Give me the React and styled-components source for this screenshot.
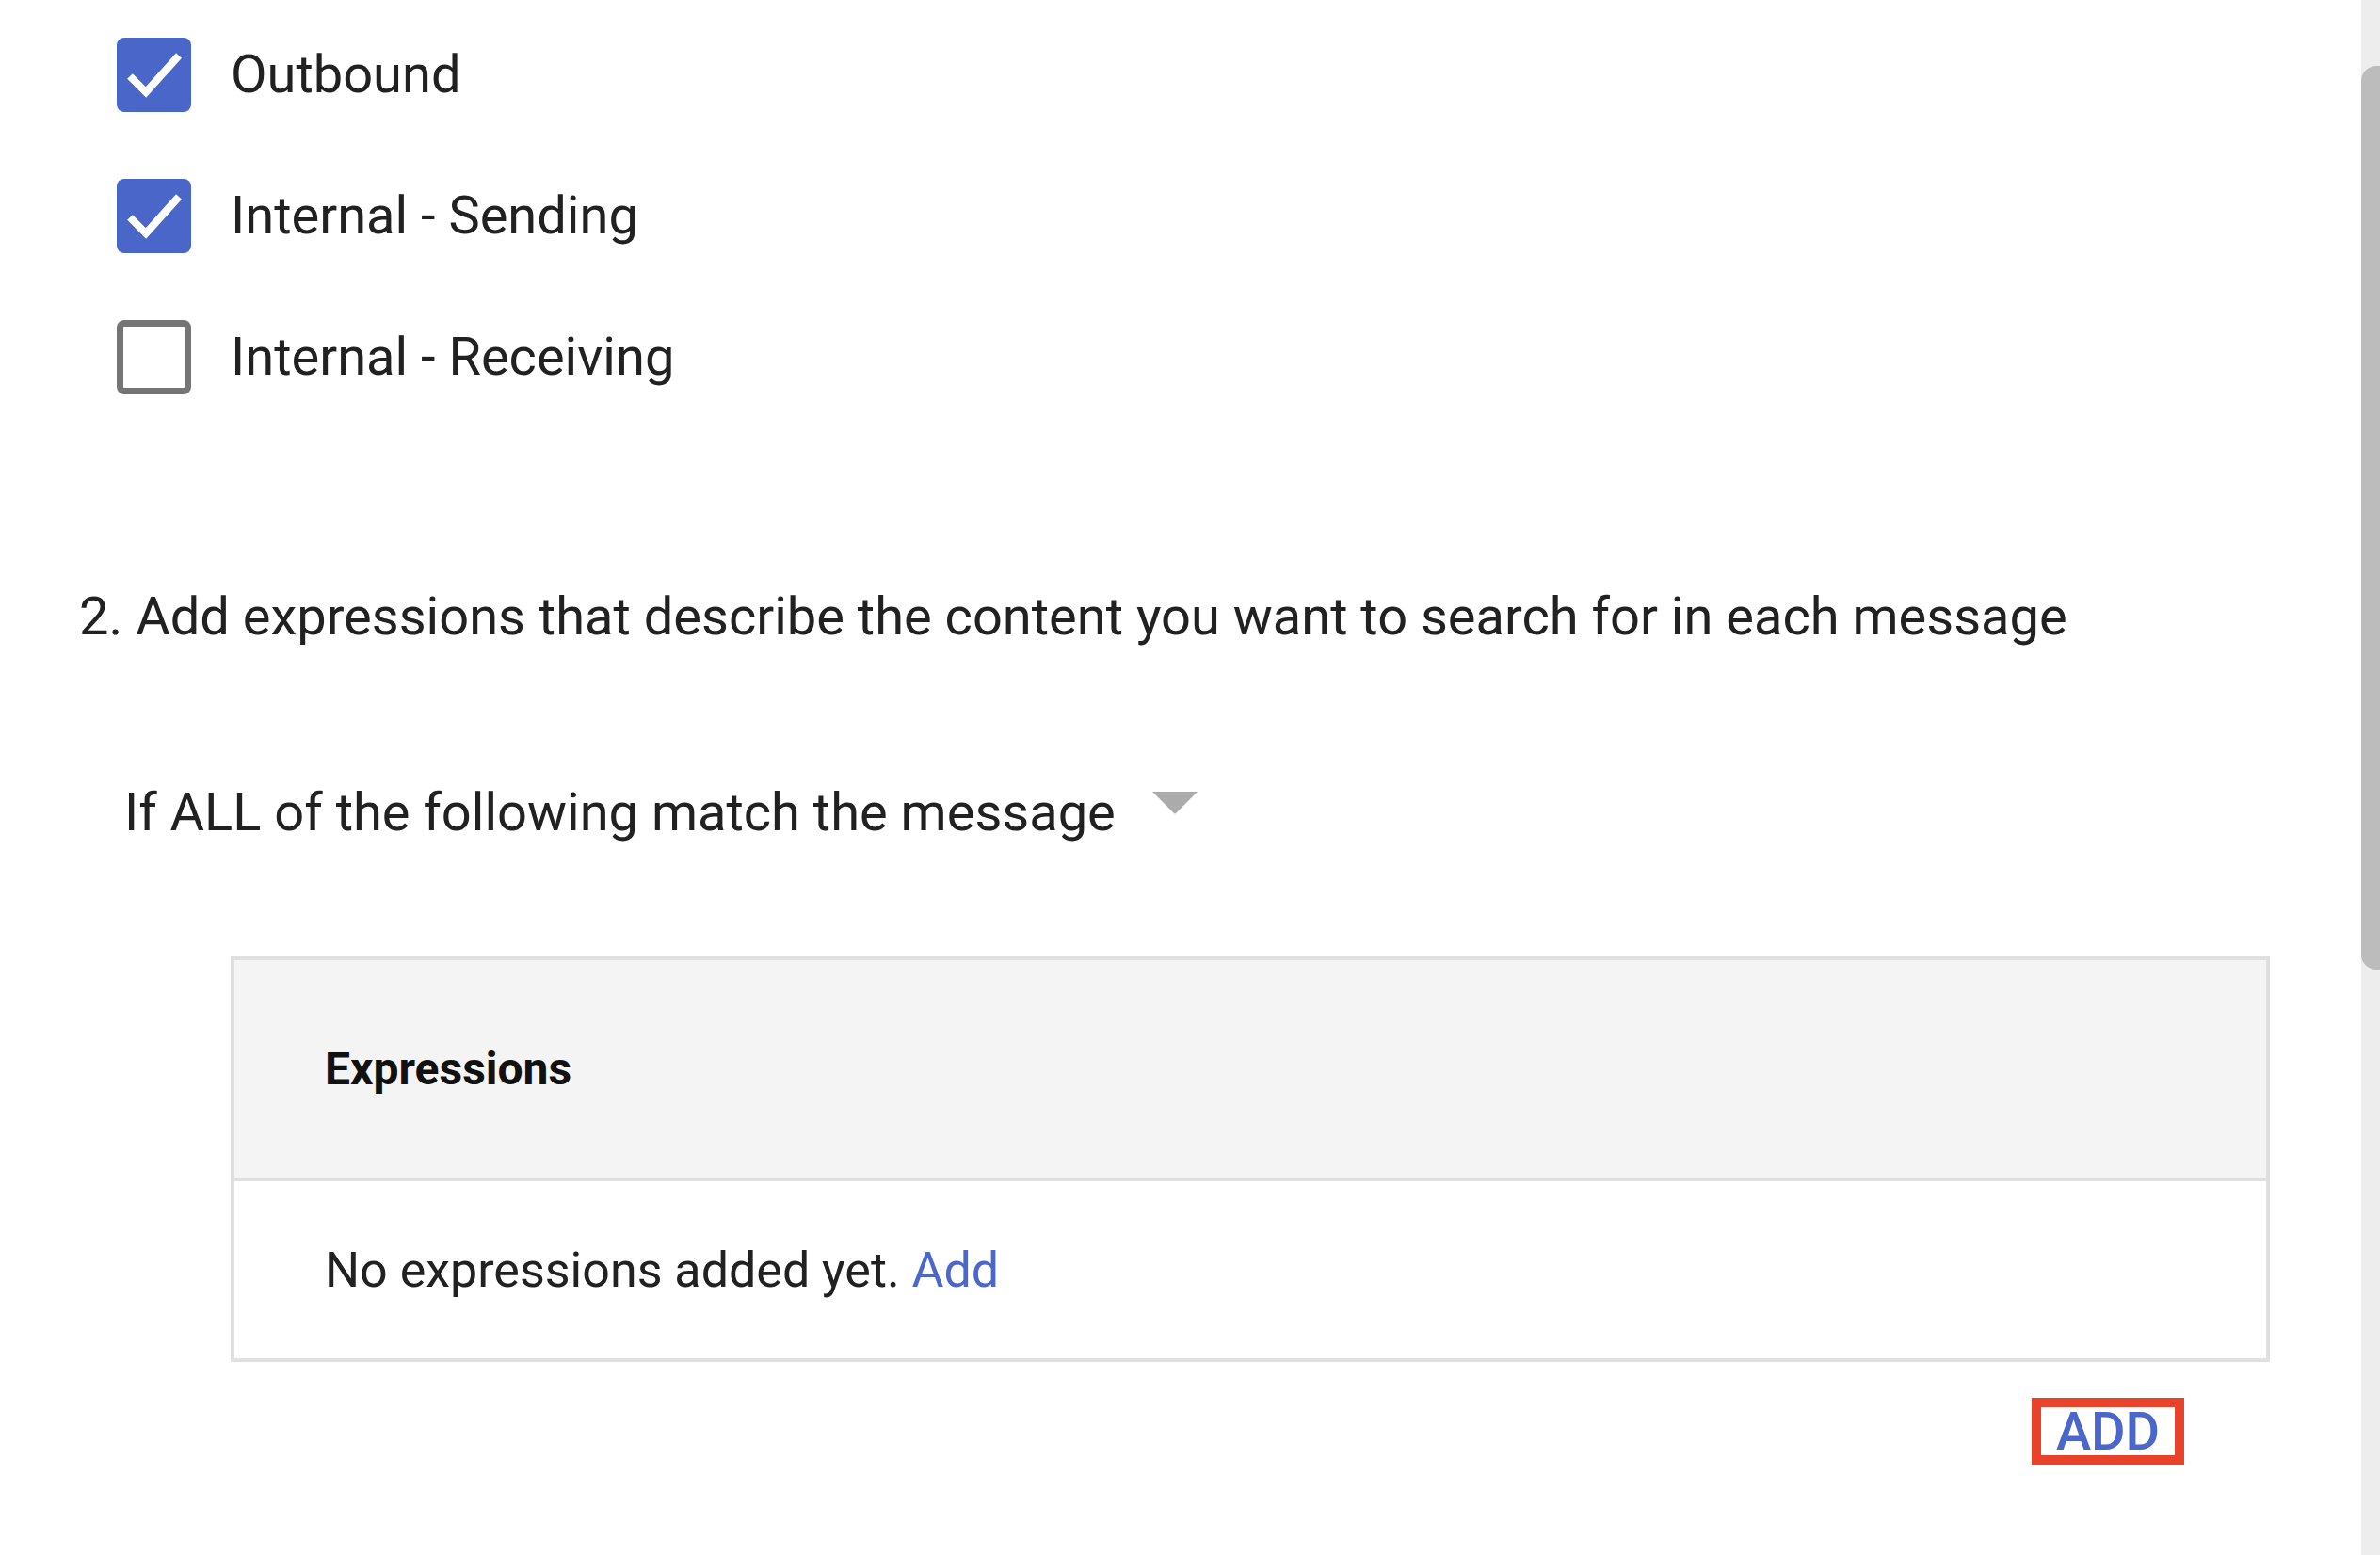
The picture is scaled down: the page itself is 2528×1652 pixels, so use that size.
import React from "react";
import styled, { createGlobalStyle } from "styled-components";

const GlobalStyle = createGlobalStyle`
    html, body {
        margin: 0;
        padding: 0;
        background: #fff;
        overflow: hidden;
    }
    body {
        font-family: Roboto, "Liberation Sans", Arial, sans-serif;
        color: #212121;
    }
`;

const Screen = styled.div`
    display: flex;
    width: 2528px;
    height: 1652px;
`;

const Content = styled.main`
    flex: 1;
    padding: 40px 0 0 0;
`;

const OptionList = styled.div`
    display: flex;
    flex-direction: column;
    gap: 71px;
    padding-left: 124px;
`;

const Option = styled.label`
    display: flex;
    align-items: center;
    gap: 42px;
    font-size: 56px;
    line-height: 79px;
`;

const Box = styled.span`
    box-sizing: border-box;
    width: 79px;
    height: 79px;
    border-radius: 8px;
    display: flex;
    align-items: center;
    justify-content: center;
    background: ${props => props.checked ? '#4a66c9' : '#fff'};
    border: ${props => props.checked ? 'none' : '7px solid #757575'};
`;

const StepTitle = styled.h2`
    margin: 203px 0 0 84px;
    font-size: 56px;
    font-weight: 400;
    line-height: 66px;
`;

const MatchRow = styled.div`
    display: flex;
    align-items: center;
    gap: 39px;
    margin: 142px 0 0 132px;
    font-size: 56px;
    line-height: 66px;
`;

const Caret = styled.span`
    width: 0;
    height: 0;
    border-left: 24px solid transparent;
    border-right: 24px solid transparent;
    border-top: 24px solid #ababab;
    margin-top: -20px;
`;

const Table = styled.div`
    margin: 120px 0 0 245px;
    width: 2166px;
    box-sizing: border-box;
    border: 4px solid #e0e0e0;
`;

const HeaderCell = styled.div`
    background: #f4f4f4;
    height: 231px;
    display: flex;
    align-items: center;
    padding-left: 96px;
    font-size: 48px;
    font-weight: 700;
    color: #111;
    border-bottom: 4px solid #e0e0e0;
`;

const BodyCell = styled.div`
    height: 188px;
    display: flex;
    align-items: center;
    padding-left: 96px;
    font-size: 52px;
    white-space: pre;
`;

const Link = styled.a`
    color: #4a67c9;
    text-decoration: none;
`;

const Footer = styled.div`
    display: flex;
    justify-content: flex-end;
    width: 2320px;
    margin-top: 38px;
`;

const AddButton = styled.button`
    box-sizing: border-box;
    width: 162px;
    height: 71px;
    border: 10px solid #e8432a;
    background: #fff;
    color: #4a67c9;
    font-family: Roboto, "Liberation Sans", Arial, sans-serif;
    font-size: 56px;
    font-weight: 500;
    line-height: 1;
    padding: 0;
    display: flex;
    align-items: center;
    justify-content: center;
`;

const Track = styled.div`
    width: 20px;
    height: 1652px;
    background: #ededed;
    padding-top: 70px;
    box-sizing: border-box;
`;

const Thumb = styled.div`
    height: 960px;
    background: #bcbcbc;
    border-radius: 16px 0 0 16px;
`;

const Check = () => (
    <svg width="79" height="79" viewBox="0 0 79 79">
        <path d="M14 41 L31 58 L66 19" fill="none" stroke="#fff" strokeWidth="8" />
    </svg>
);

const options = [
    {label: 'Outbound', checked: true},
    {label: 'Internal - Sending', checked: true},
    {label: 'Internal - Receiving', checked: false},
];

const App = () => {
    return (
        <Screen>
            <GlobalStyle />
            <Content>
                <OptionList>
                    {options.map(o => (
                        <Option key={o.label}>
                            <Box checked={o.checked}>{o.checked && <Check />}</Box>
                            {o.label}
                        </Option>
                    ))}
                </OptionList>
                <StepTitle>2. Add expressions that describe the content you want to search for in each message</StepTitle>
                <MatchRow>
                    If ALL of the following match the message
                    <Caret />
                </MatchRow>
                <Table>
                    <HeaderCell>Expressions</HeaderCell>
                    <BodyCell>
                        No expressions added yet. <Link href="#">Add</Link>
                    </BodyCell>
                </Table>
                <Footer>
                    <AddButton>ADD</AddButton>
                </Footer>
            </Content>
            <Track>
                <Thumb />
            </Track>
        </Screen>
    );
}

export default App;
